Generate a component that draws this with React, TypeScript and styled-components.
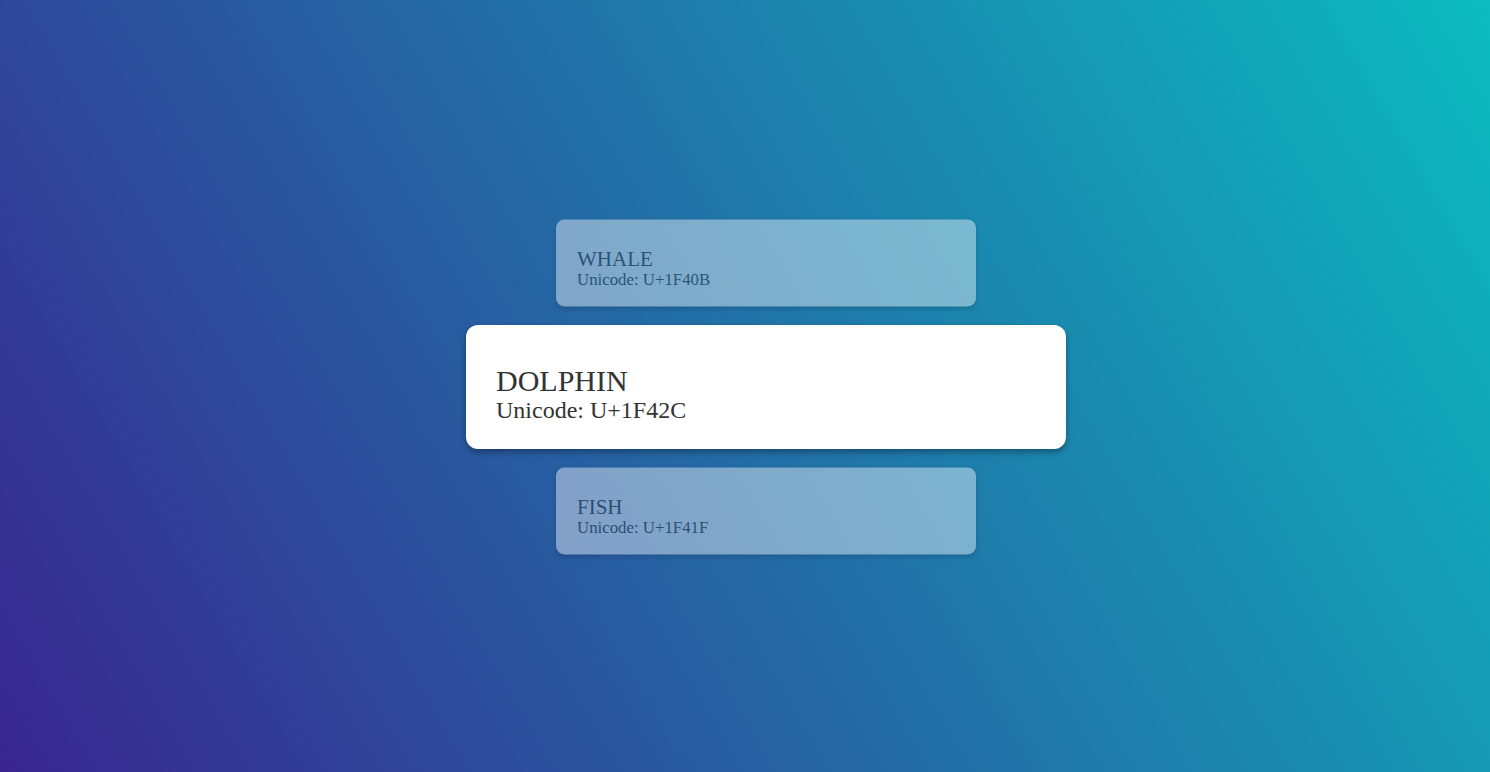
import React, { FC } from "react";
import styled, { createGlobalStyle } from "styled-components";

const GlobalStyle = createGlobalStyle`
  html, body {
    margin: 0;
    padding: 0;
    height: 100%;
  }
  body {
    font-family: "Liberation Serif", "Times New Roman", serif;
    color: #333;
  }
`;

const Page = styled.div`
  box-sizing: border-box;
  width: 100vw;
  height: 100vh;
  padding: 2px 0 0 42px;
  display: flex;
  align-items: center;
  justify-content: center;
  background: linear-gradient(60deg, #39258f 0%, #0bbbbf 100%);
  overflow: hidden;
`;

const Carousel = styled.div`
  display: flex;
  flex-direction: column;
  align-items: center;
`;

const Card = styled.div<{ $active: boolean }>`
  box-sizing: border-box;
  width: 600px;
  height: 124px;
  padding: 39px 30px 0;
  background: #fff;
  border-radius: 12px;
  box-shadow: 0 3px 6px rgba(0, 0, 0, 0.35);
  transform: scale(${p => (p.$active ? 1 : 0.7)});
  opacity: ${p => (p.$active ? 1 : 0.42)};
`;

const Name = styled.div`
  font-size: 30px;
  line-height: 33px;
`;

const Code = styled.div`
  font-size: 24px;
  line-height: 27px;
`;

const animals = [
  { name: "WHALE", code: "U+1F40B" },
  { name: "DOLPHIN", code: "U+1F42C" },
  { name: "FISH", code: "U+1F41F" }
];

const App: FC = () => {
  const current = 1;
  return (
    <>
      <GlobalStyle />
      <Page>
        <Carousel>
          {animals.map((a, i) => (
            <Card key={a.name} $active={i === current}>
              <Name>{a.name}</Name>
              <Code>Unicode: {a.code}</Code>
            </Card>
          ))}
        </Carousel>
      </Page>
    </>
  );
};

export default App;
